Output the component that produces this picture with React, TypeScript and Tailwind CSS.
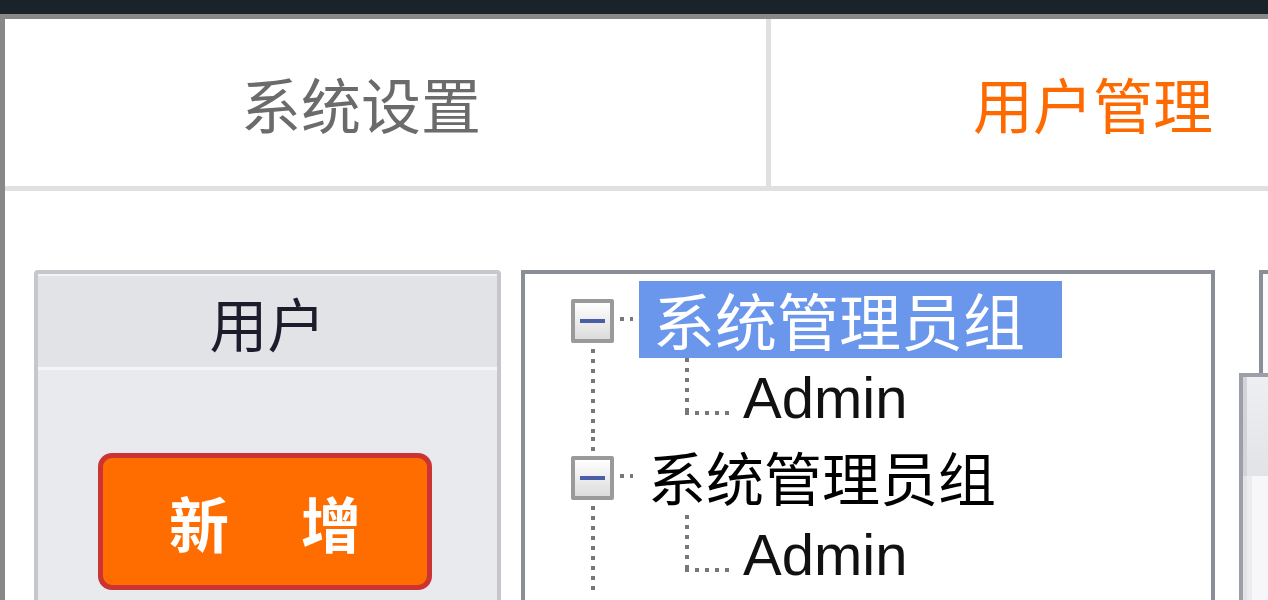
const cjk = "font-['Noto_Sans_CJK_SC','Noto_Sans_CJK_JP',sans-serif]";

const vDots =
  "bg-[repeating-linear-gradient(to_bottom,#777_0px,#777_4px,transparent_4px,transparent_10px)]";
const hDots =
  "bg-[repeating-linear-gradient(to_right,#777_0px,#777_4px,transparent_4px,transparent_10px)]";

const Expander = () => (
  <div className="flex h-[44px] w-[43px] shrink-0 items-center justify-center rounded-[2px] border-4 border-[#9a9a9a] bg-gradient-to-b from-[#ffffff] to-[#dcdcdc]">
    <div className="h-[4px] w-[25px] bg-[#4a5ea8]" />
  </div>
);

type Group = { name: string; selected?: boolean; first?: boolean };

const TreeGroup = ({ name, selected, first }: Group) => (
  <div className="flex">
    {/* rail with expander */}
    <div className="ml-[46px] flex w-[43px] flex-col items-center">
      <div className={`h-[19px] w-[4px] ${first ? "" : vDots}`} />
      <Expander />
      <div className="flex w-[4px] flex-1 pt-[6px]">
        <div className={`w-[4px] flex-1 ${vDots}`} />
      </div>
    </div>

    <div className="flex flex-col">
      <div className="flex h-[78px] items-center">
        <div className={`ml-[6px] h-[4px] w-[13px] ${hDots}`} />
        <div
          className={`ml-[6px] flex h-[77px] w-[423px] items-center ${cjk} leading-none ${
            selected
              ? "bg-[#6a97ec] pl-[14px] text-[62px] text-white"
              : "pl-[9px] text-[58px] text-black"
          }`}
        >
          系统管理员组
        </div>
      </div>

      <div className="flex h-[79px]">
        <div className="ml-[71px] flex flex-col">
          <div className={`h-[53px] w-[4px] ${vDots}`} />
          <div className={`h-[4px] w-[47px] ${hDots}`} />
        </div>
        <div className="ml-[11px] flex items-center font-['Liberation_Sans',sans-serif] text-[58px] leading-none text-[#111]">
          Admin
        </div>
      </div>
    </div>
  </div>
);

export default function App() {
  return (
    <div className="h-[600px] w-[1268px] overflow-hidden bg-white">
      <div className="h-[14px] bg-[#1b232a]" />
      <div className="h-[5px] bg-[#888888]" />

      <div className="flex h-[581px] border-l-[5px] border-[#888888]">
        <div className="flex min-w-0 flex-1 flex-col">
          {/* tabs */}
          <div className={`flex h-[172px] shrink-0 border-b-[5px] border-[#e0e0e0] ${cjk}`}>
            <div className="flex w-[766px] shrink-0 items-center border-r-[5px] border-[#e0e0e0] pl-[236px] text-[60px] leading-none text-[#6b6b6b]">
              系统设置
            </div>
            <div className="flex flex-1 items-center pl-[202px] text-[60px] leading-none text-[#ff6a00]">
              用户管理
            </div>
          </div>

          {/* body */}
          <div className="flex pl-[29px] pt-[79px]">
            {/* user panel */}
            <div className="flex h-[420px] w-[467px] shrink-0 flex-col rounded-[4px] border-4 border-[#c5c7cd] bg-[#e9eaed]">
              <div className={`flex h-[93px] items-center justify-center border-t-2 border-[#f2f3f5] bg-[#e2e3e7] ${cjk} text-[58px] leading-none text-[#1c1c2c]`}>
                用户
              </div>
              <div className="h-[3px] bg-[#f4f5f7]" />
              <div className="pl-[60px] pt-[83px]">
                <button className={`flex h-[137px] w-[334px] items-center justify-center rounded-[14px] border-[5px] border-[#cc3333] bg-[#ff6d00] pl-[6px] ${cjk} text-[60px] font-bold leading-none tracking-[6px] text-white`}>
                  新　增
                </button>
              </div>
            </div>

            {/* tree */}
            <div className="ml-[20px] h-[420px] w-[694px] shrink-0 border-4 border-[#8a8e96] bg-white pt-[6px]">
              <TreeGroup name="系统管理员组" selected first />
              <TreeGroup name="系统管理员组" />
            </div>

            {/* right partial panels */}
            <div className="ml-[24px] flex w-[200px] shrink-0 flex-col">
              <div className="ml-[20px] h-[103px] border-l-4 border-t-4 border-[#8a8e96] bg-[#fafafa]" />
              <div className="flex h-[300px] flex-col border-4 border-[#9c9fa7] bg-[#f7f7f9]">
                <div className="flex h-[99px] bg-[#e3e4e8]">
                  <div className="w-[4px] bg-[#d3d4d9]" />
                  <div className="flex-1 bg-gradient-to-b from-[#eeeff2] to-[#e2e3e7]" />
                </div>
                <div className="flex flex-1">
                  <div className="w-[4px] bg-[#e3e4e8]" />
                  <div className="w-[5px] bg-[#ececef]" />
                </div>
              </div>
            </div>
          </div>
        </div>
      </div>
    </div>
  );
}
